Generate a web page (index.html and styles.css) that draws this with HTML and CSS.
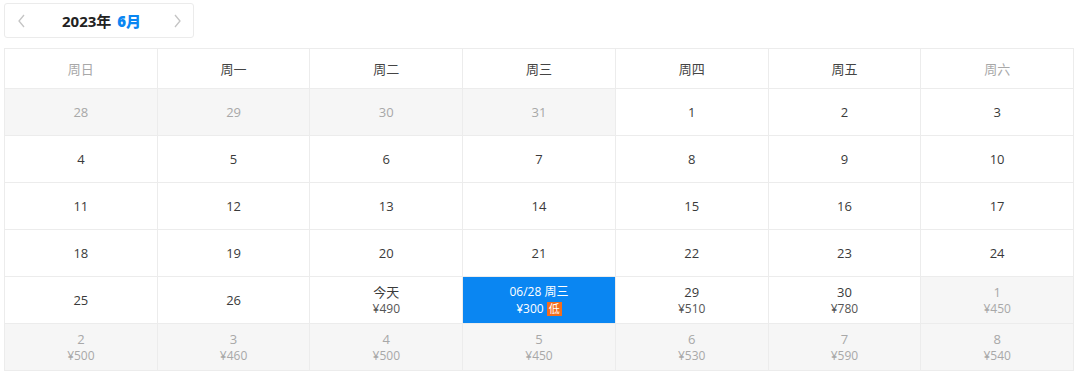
FILE: index.html
```html
<!DOCTYPE html>
<html lang="zh-CN">
<head>
<meta charset="UTF-8">
<title>价格日历</title>
<link rel="stylesheet" href="styles.css">
</head>
<body>
    <div class="month-bar">
        <span class="arrow">
            <svg viewBox="0 0 12 16"><path d="M8 2L3 8l5 6" /></svg>
        </span>
        <span class="month-title">2023年 <b>6月</b></span>
        <span class="arrow">
            <svg viewBox="0 0 12 16"><path d="M4 2l5 6-5 6" /></svg>
        </span>
    </div>

    <div class="calendar">
        <div class="week weekend">周日</div>
        <div class="week">周一</div>
        <div class="week">周二</div>
        <div class="week">周三</div>
        <div class="week">周四</div>
        <div class="week">周五</div>
        <div class="week weekend">周六</div>

        <div class="day other">28</div>
        <div class="day other">29</div>
        <div class="day other">30</div>
        <div class="day other">31</div>
        <div class="day">1</div>
        <div class="day">2</div>
        <div class="day">3</div>

        <div class="day">4</div>
        <div class="day">5</div>
        <div class="day">6</div>
        <div class="day">7</div>
        <div class="day">8</div>
        <div class="day">9</div>
        <div class="day">10</div>

        <div class="day">11</div>
        <div class="day">12</div>
        <div class="day">13</div>
        <div class="day">14</div>
        <div class="day">15</div>
        <div class="day">16</div>
        <div class="day">17</div>

        <div class="day">18</div>
        <div class="day">19</div>
        <div class="day">20</div>
        <div class="day">21</div>
        <div class="day">22</div>
        <div class="day">23</div>
        <div class="day">24</div>

        <div class="day">25</div>
        <div class="day">26</div>
        <div class="day"><span>今天</span><small>¥490</small></div>
        <div class="day active"><span>06/28 周三</span><small>¥300 <i class="low">低</i></small></div>
        <div class="day"><span>29</span><small>¥510</small></div>
        <div class="day"><span>30</span><small>¥780</small></div>
        <div class="day other"><span>1</span><small>¥450</small></div>

        <div class="day other"><span>2</span><small>¥500</small></div>
        <div class="day other"><span>3</span><small>¥460</small></div>
        <div class="day other"><span>4</span><small>¥500</small></div>
        <div class="day other"><span>5</span><small>¥450</small></div>
        <div class="day other"><span>6</span><small>¥530</small></div>
        <div class="day other"><span>7</span><small>¥590</small></div>
        <div class="day other"><span>8</span><small>¥540</small></div>
    </div>
</body>
</html>
```

FILE: styles.css
```css
:root{
    --blue:#0a86f2;
    --line:#ececec;
    --text:#3a3a3a;
    --muted:#a8a8a8;
}

*{margin:0;padding:0;box-sizing:border-box}
body{
    font-family:"Open Sans","Noto Sans CJK SC",sans-serif;
    font-size:13px;
    color:var(--text);
    background:#fff;
    padding:3px 4px;
}

/* month switcher */
.month-bar{
    width:190px;
    height:35px;
    display:flex;
    align-items:center;
    justify-content:space-between;
    padding:0 10px 0 11px;
    border:1px solid #ebebeb;
    border-radius:3px;
}
.month-title{
    font-weight:700;
    font-size:15px;
    color:#222;
    margin-left:4px;
}
.month-title b{color:var(--blue);margin-left:2px}
.arrow svg{
    width:12px;height:16px;
    display:block;
    fill:none;
    stroke:#c4c4c4;
    stroke-width:1.3;
}

/* calendar grid */
.calendar{
    margin-top:10px;
    width:1070px;
    display:grid;
    grid-template-columns:repeat(7,1fr);
    grid-template-rows:40px repeat(6,47px);
    border:1px solid var(--line);
    border-right:none;
    border-bottom:none;
}
.week,.day{
    border-right:1px solid var(--line);
    border-bottom:1px solid var(--line);
    display:flex;
    flex-direction:column;
    align-items:center;
    justify-content:center;
    line-height:16px;
}
.week{color:#444}
.week.weekend{color:var(--muted)}
.day small{
    font-size:12px;
    color:#555;
    margin-top:1px;
}
.day.other{
    background:#f6f6f6;
    color:var(--muted);
}
.day.other small{color:var(--muted)}

.day.active{
    background:var(--blue);
    color:#fff;
    font-size:12px;
}
.day.active small{color:#fff}
.low{
    font-style:normal;
    display:inline-block;
    background:#f46d1c;
    color:#fff;
    font-size:11px;
    line-height:14px;
    padding:0 2px;
}
```
